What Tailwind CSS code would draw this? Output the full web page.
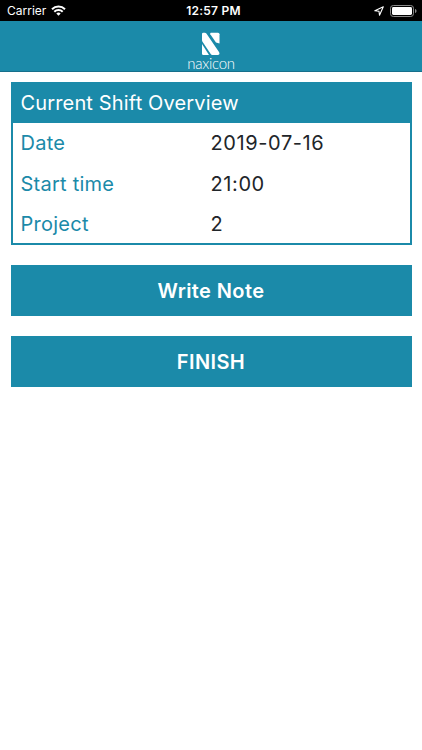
<!DOCTYPE html>
<html lang="en">
  <head>
    <meta charset="UTF-8" />
    <meta name="viewport" content="width=device-width, initial-scale=1.0" />
    <script src="https://cdn.jsdelivr.net/npm/@tailwindcss/browser@4"></script>
    <title>Naxicon</title>
  </head>
  <body class="bg-white font-['Inter',sans-serif] text-[#212529]">
    <!-- status bar -->
    <div class="grid h-[21px] grid-cols-3 items-center bg-black pr-[5px] pl-[7px] text-white">
      <div class="flex items-center gap-[5px]">
        <span class="text-[12px] leading-[21px]">Carrier</span>
        <svg class="h-[11px] w-[15px]" viewBox="0 0 15 11" fill="none" stroke="white" stroke-width="2">
          <path d="M1 4.3a9.2 9.2 0 0 1 13 0" />
          <path d="M3.3 6.8a6 6 0 0 1 8.4 0" />
          <path d="M7.5 10.8 5.3 8.5a3.2 3.2 0 0 1 4.4 0z" fill="white" stroke="none" />
        </svg>
      </div>
      <p class="pl-[3px] text-center text-[12px] leading-[21px] font-semibold tracking-[0.25px]">12:57 PM</p>
      <div class="flex items-center justify-end gap-1.5">
        <svg class="h-[10px] w-[10px]" viewBox="0 0 10 10" fill="none" stroke="white" stroke-width="1.1" stroke-linejoin="round">
          <path d="M9.3 .8 5.5 9.2 5 5.2.8 4.7z" />
        </svg>
        <svg class="h-[12px] w-[27px]" viewBox="0 0 27 12">
          <rect x="0.5" y="0.5" width="23" height="11" rx="2.8" fill="none" stroke="#8a8a8a" />
          <rect x="2" y="2" width="20" height="8" rx="1.4" fill="white" />
          <path d="M25 4v4c1-.4 1.5-1.1 1.5-2S26 4.4 25 4z" fill="#8a8a8a" />
        </svg>
      </div>
    </div>

    <header class="flex h-[51px] flex-col items-center border-b border-[#166f8b] bg-[#1b8aa9] pt-[11px] text-white">
      <svg class="mr-[2px] h-[24px] w-[19px]" viewBox="0 0 19 24" fill="white">
        <path d="M1 2Q1 .7 2.3 .7H3.8Q4.800 .7 5.400 1.600L18 20Q18.800 21.300 18.300 22.200T16.500 23H11.300Q10.300 23 9.700 22L1.500 9.800Q1 9 1 8.100z" />
        <path d="M9.800 .7H17Q18.500 .7 18.500 2.200V11.500L15 10.500 9.300 2.200Q8.800 1 9.800 .7z" />
        <path d="M1 12 8 23H2.300Q1 23 1 21.500z" />
      </svg>
      <span class="font-['Lato',sans-serif] text-[15px] leading-[15px] font-light tracking-[-0.3px]">naxicon</span>
    </header>

    <main class="flex flex-col gap-5 px-[10.5px] pt-2.5 text-[20px]">
      <section class="h-[163px] border-2 border-[#1b8aa9]">
        <h1 class="h-[39px] bg-[#1b8aa9] px-2 leading-[38px] tracking-[0.15px] text-white">Current Shift Overview</h1>
        <dl class="grid auto-rows-[40.7px] grid-cols-[190px_1fr] px-2 leading-[41px] tracking-[0.25px]">
          <dt class="text-[#1b8aa9]">Date</dt>
          <dd class="tracking-[0.6px]">2019-07-16</dd>
          <dt class="text-[#1b8aa9]">Start time</dt>
          <dd class="tracking-[0.6px]">21:00</dd>
          <dt class="text-[#1b8aa9]">Project</dt>
          <dd>2</dd>
        </dl>
      </section>
      <button class="h-[51px] bg-[#1b8aa9] font-semibold tracking-[0.4px] text-white">Write Note</button>
      <button class="h-[51px] bg-[#1b8aa9] font-semibold tracking-[0.4px] text-white">FINISH</button>
    </main>
  </body>
</html>
